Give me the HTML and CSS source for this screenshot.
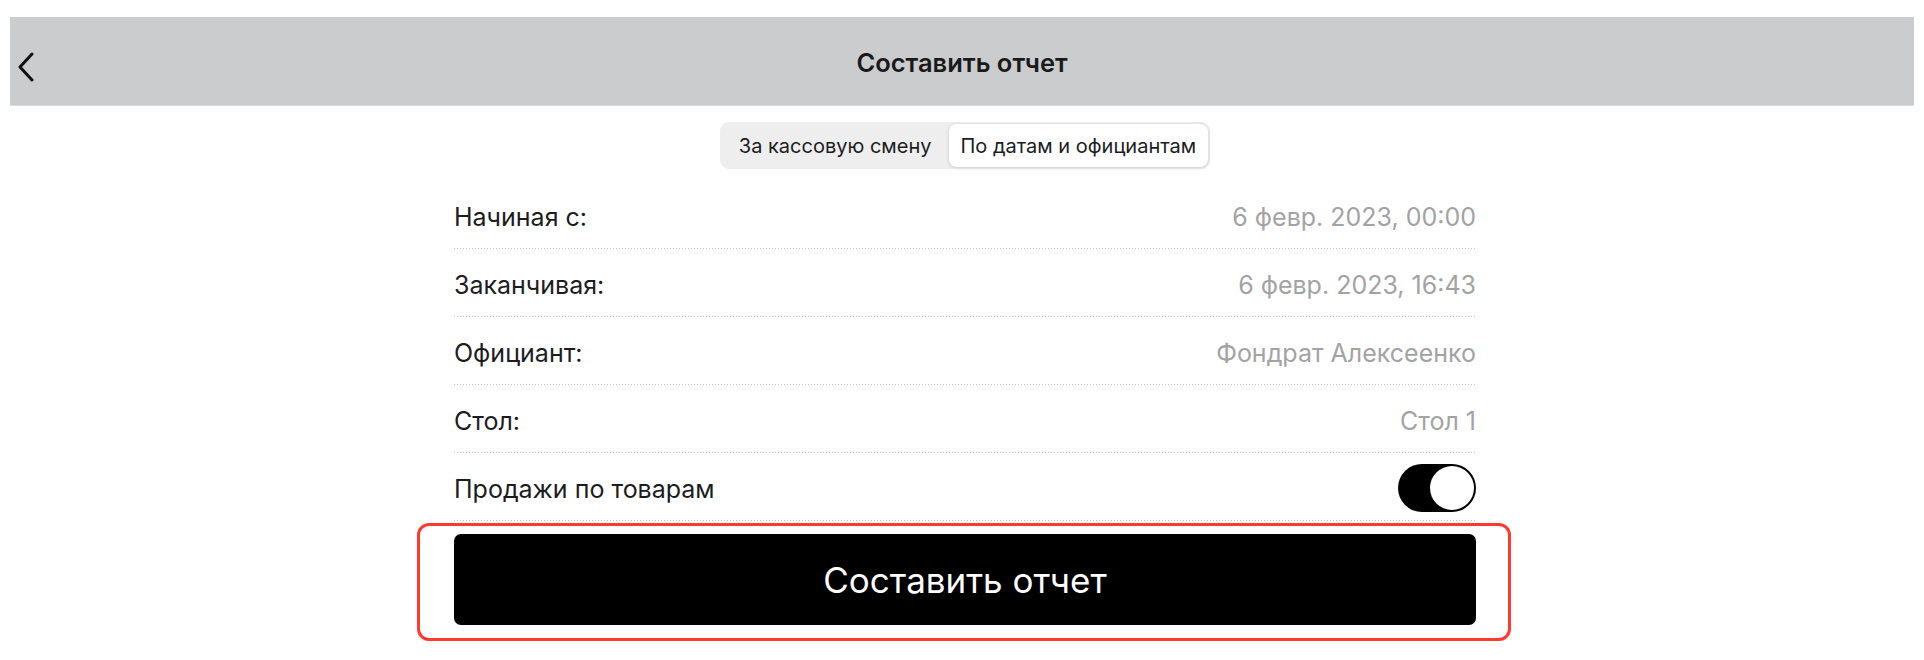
FILE: index.html
```html
<!DOCTYPE html>
<html lang="ru">
<head>
<meta charset="UTF-8" />
<meta name="viewport" content="width=device-width, initial-scale=1" />
<title>Составить отчет</title>
<link rel="stylesheet" href="styles.css">
</head>
<body>
<div class="topbar">
  <button class="back" aria-label="Назад">
    <svg width="18" height="30" viewBox="0 0 18 30"><polyline points="15,2 3,15 15,28" fill="none" stroke="#111" stroke-width="3" stroke-linecap="round" stroke-linejoin="round"/></svg>
  </button>
  <div class="title">Составить отчет</div>
</div>

<div class="segmented">
  <div class="seg">За кассовую смену</div>
  <div class="seg active">По датам и официантам</div>
</div>

<div class="form">
  <div class="row"><span class="label">Начиная с:</span><span class="value">6 февр. 2023, 00:00</span></div>
  <div class="row"><span class="label">Заканчивая:</span><span class="value">6 февр. 2023, 16:43</span></div>
  <div class="row"><span class="label">Официант:</span><span class="value">Фондрат Алексеенко</span></div>
  <div class="row"><span class="label">Стол:</span><span class="value">Стол 1</span></div>
  <div class="row"><span class="label">Продажи по товарам</span><span class="switch on"><span class="knob"></span></span></div>

  <div class="submit-wrap">
    <button class="submit">Составить отчет</button>
    <div class="highlight"></div>
  </div>
</div>
</body>
</html>
```

FILE: styles.css
```css
body {
  font-family: Inter, 'Noto Sans', sans-serif;
  margin: 0;
  padding-bottom: 30px;
  background: #fff;
  color: #1c1c1e;
}
.topbar {
  margin: 17px 10px 0 10px;
  height: 88px;
  background: #cbcccd;
  border-bottom: 1px solid #dcdcdc;
  display: flex;
  align-items: center;
  justify-content: center;
  position: relative;
}
.back {
  position: absolute;
  left: 7px;
  top: 35px;
  background: none;
  border: none;
  padding: 0;
  cursor: pointer;
}
.title {
  font-size: 25.5px;
  font-weight: 600;
  color: #1a1a1a;
  padding-top: 2px;
}
.segmented {
  width: max-content;
  margin: 16px auto 0 auto;
  transform: translateX(3px);
  display: flex;
  background: #eeeeef;
  border-radius: 9px;
  padding: 2px;
}
.seg {
  height: 43px;
  display: flex;
  align-items: center;
  padding: 0 17px;
  font-size: 20px;
  color: #1c1c1e;
  border-radius: 8px;
}
.seg.active {
  background: #fff;
  box-shadow: 0 1px 4px rgba(0,0,0,0.14);
  padding: 0 12px;
}
.form {
  width: 1022px;
  margin: 12px 0 0 calc(50% - 508px);
}
.row {
  height: 68px;
  background-image: linear-gradient(to right, #c4c4c4 1px, transparent 1px);
  background-size: 3px 1px;
  background-repeat: repeat-x;
  background-position: left bottom;
  display: flex;
  align-items: center;
  justify-content: space-between;
  font-size: 25px;
}
.label {
  color: #1c1c1e;
  padding-top: 4px;
}
.value {
  color: #a3a3a3;
  padding-top: 4px;
}
.switch {
  width: 78px;
  height: 48px;
  border-radius: 24px;
  background: #000;
  position: relative;
  margin-top: 2px;
}
.switch .knob {
  position: absolute;
  right: 2px;
  top: 2px;
  width: 44px;
  height: 44px;
  border-radius: 50%;
  background: #fff;
}
.submit-wrap {
  position: relative;
  margin-top: 13px;
}
.submit {
  display: block;
  width: 100%;
  height: 91px;
  background: #000;
  color: #fff;
  border: none;
  border-radius: 7px;
  font-family: inherit;
  font-size: 35px;
  cursor: pointer;
  padding-top: 2px;
}
.highlight {
  position: absolute;
  left: -37px;
  right: -35px;
  top: -11px;
  bottom: -16px;
  border: 3px solid #ff3b30;
  border-radius: 12px;
  pointer-events: none;
}
```
